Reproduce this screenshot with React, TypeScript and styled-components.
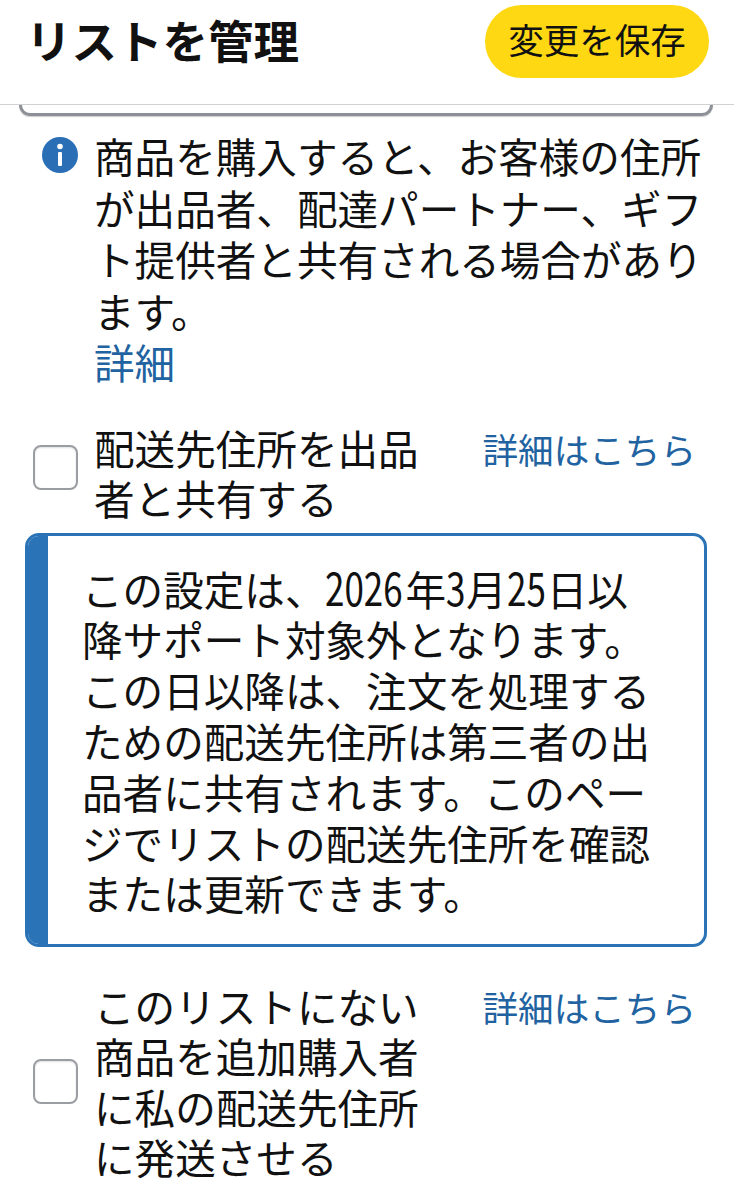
import React from "react";
import styled, { createGlobalStyle } from "styled-components";

const GlobalStyle = createGlobalStyle`
  html, body {
    margin: 0;
    padding: 0;
    background: #fff;
  }
  body {
    font-family: "Noto Sans CJK JP", "Noto Sans", sans-serif;
    color: #111;
  }
`;

const Page = styled.div`
  width: 734px;
  height: 1200px;
  overflow: hidden;
  background: #fff;
`;

const Header = styled.header`
  height: 105px;
  box-sizing: border-box;
  display: flex;
  justify-content: space-between;
  align-items: flex-start;
  padding: 5px 25px 0 26px;
  border-bottom: 1px solid #d0d2d2;
`;

const Title = styled.h1`
  margin: 2px 0 0;
  font-size: 45.5px;
  line-height: 64px;
  font-weight: 700;
  color: #111;
`;

const SaveButton = styled.button`
  width: 224px;
  height: 73px;
  border: none;
  border-radius: 37px;
  background: #ffd814;
  color: #111;
  font-family: inherit;
  font-size: 35.5px;
  padding: 0 0 6px;
`;

const CutOffBox = styled.div`
  height: 11px;
  margin: 0 21px 0 19px;
  box-sizing: border-box;
  border: 3px solid #8d9096;
  border-top: none;
  border-radius: 0 0 22px 22px;
  box-shadow: 0 1px 1px rgba(0, 0, 0, 0.2);
`;

const Notice = styled.section`
  display: flex;
  align-items: flex-start;
  gap: 16px;
  margin: 14px 24px 0 42px;
`;

const InfoIcon = styled.svg`
  flex: none;
  width: 36px;
  height: 36px;
  margin-top: 7px;
`;

const BodyText = styled.div`
  font-size: 40.6px;
  line-height: 51.5px;
`;

const TextLink = styled.a`
  display: block;
  color: #2162a1;
  font-size: 40.5px;
  line-height: 51.5px;
`;

const OptionRow = styled.div<{ $top: number }>`
  display: flex;
  align-items: flex-start;
  margin: ${({ $top }) => $top}px 38px 0 33px;
`;

const CheckBox = styled.span<{ $top: number }>`
  flex: none;
  width: 45px;
  height: 45px;
  margin-top: ${({ $top }) => $top}px;
  box-sizing: border-box;
  border: 2px solid #9a9da2;
  border-radius: 8px;
  background: #fff;
  box-shadow: inset 0 1px 2px rgba(0, 0, 0, 0.12);
`;

const OptionLabel = styled.div`
  width: 330px;
  margin-left: 16px;
  font-size: 40.6px;
  line-height: 50.6px;
`;

const OptionLink = styled.a`
  margin-left: auto;
  color: #2162a1;
  font-size: 35.6px;
  line-height: 51.5px;
  white-space: nowrap;
`;

const Alert = styled.section`
  display: flex;
  margin: 9px 27px 0 25px;
  height: 414px;
  box-sizing: border-box;
  border: 3px solid #2a73b7;
  border-radius: 14px;
  overflow: hidden;
`;

const AlertBar = styled.div`
  flex: none;
  width: 20px;
  background: #2a73b7;
`;

const AlertText = styled.div`
  padding: 27px 47px 0 34px;
  font-size: 40.6px;
  line-height: 50.8px;
`;

// the digits in this notice are tall and condensed, much narrower than the kana
const Digits = styled.span<{ $count: number }>`
  display: inline-block;
  width: ${({ $count }) => $count * 20}px;
  font-size: 46px;
  line-height: 1;
  white-space: nowrap;
  transform: scaleX(0.76);
  transform-origin: left center;
`;

export default function App() {
  return (
    <Page>
      <GlobalStyle />
      <Header>
        <Title>リストを管理</Title>
        <SaveButton>変更を保存</SaveButton>
      </Header>
      <CutOffBox />
      <Notice>
        <InfoIcon viewBox="0 0 36 36">
          <circle cx="18" cy="18" r="18" fill="#2a6fb5" />
          <circle cx="18" cy="9.5" r="2.8" fill="#fff" />
          <rect x="16" y="15" width="4" height="14" rx="1" fill="#fff" />
        </InfoIcon>
        <div>
          <BodyText>商品を購入すると、お客様の住所が出品者、配達パートナー、ギフト提供者と共有される場合があります。</BodyText>
          <TextLink>詳細</TextLink>
        </div>
      </Notice>
      <OptionRow $top={35}>
        <CheckBox $top={22} />
        <OptionLabel>配送先住所を出品者と共有する</OptionLabel>
        <OptionLink>詳細はこちら</OptionLink>
      </OptionRow>
      <Alert>
        <AlertBar />
        <AlertText>
          この設定は、<Digits $count={4}>2026</Digits>年<Digits $count={1}>3</Digits>月<Digits $count={2}>25</Digits>日以降サポート対象外となります。この日以降は、注文を処理するための配送先住所は第三者の出品者に共有されます。このページでリストの配送先住所を確認または更新できます。
        </AlertText>
      </Alert>
      <OptionRow $top={34}>
        <CheckBox $top={78} />
        <OptionLabel>このリストにない商品を追加購入者に私の配送先住所に発送させる</OptionLabel>
        <OptionLink>詳細はこちら</OptionLink>
      </OptionRow>
    </Page>
  );
}
